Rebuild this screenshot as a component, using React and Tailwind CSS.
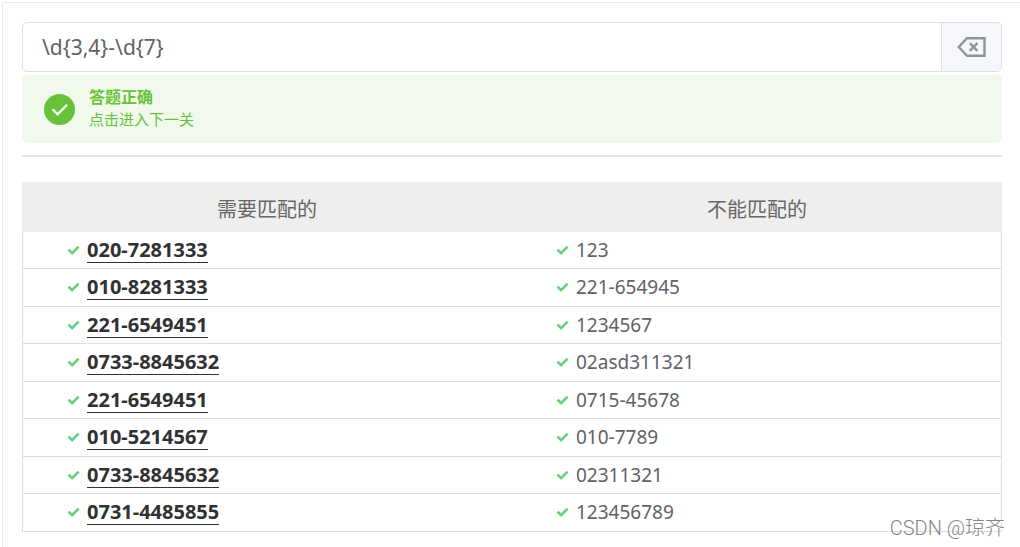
import React, { useState } from "react";

const rows = [
  { match: "020-7281333", skip: "123" },
  { match: "010-8281333", skip: "221-654945" },
  { match: "221-6549451", skip: "1234567" },
  { match: "0733-8845632", skip: "02asd311321" },
  { match: "221-6549451", skip: "0715-45678" },
  { match: "010-5214567", skip: "010-7789" },
  { match: "0733-8845632", skip: "02311321" },
  { match: "0731-4485855", skip: "123456789" },
];

const Tick = () => (
  <svg className="w-[13px] h-3 shrink-0" viewBox="0 0 13 12" fill="none" aria-hidden="true">
    <path d="M1.5 5.6 5.1 9.1 11.6 2.6" stroke="#67d17c" strokeWidth="2.7" />
  </svg>
);

const App = () => {
  const [pattern, setPattern] = useState("\\d{3,4}-\\d{7}");

  return (
    <div className="pt-[2px] pl-[2px] bg-white font-['Noto_Sans','Noto_Sans_CJK_SC',sans-serif] text-[#606266]">
      <main className="relative min-h-[calc(100vh-2px)] border-t border-l border-[#ebebeb] pt-[19px] pl-[19px] pr-[18px] pb-[15px]">
        {/* Pattern input with clear button */}
        <div className="flex h-[50px] rounded-[5px] border border-[#dcdfe6] overflow-hidden">
          <input
            aria-label="正则表达式"
            className="flex-1 min-w-0 px-[19px] pt-[2px] text-[21px] outline-none"
            type="text"
            value={pattern}
            onChange={(e) => setPattern(e.target.value)}
          />
          <button
            type="button"
            aria-label="清空"
            onClick={() => setPattern("")}
            className="w-[60px] flex items-center justify-center border-l border-[#dcdfe6] bg-[#f5f7fa] cursor-pointer"
          >
            <svg className="w-[30px] h-5" viewBox="0 0 30 20" fill="none" stroke="#909399" aria-hidden="true">
              <path d="M10 1.2H27.5V18.8H10L1.8 10Z" strokeWidth="2.4" />
              <path d="M12.8 6.2 20.4 13.8M20.4 6.2 12.8 13.8" strokeWidth="2.4" />
            </svg>
          </button>
        </div>

        {/* Result message */}
        <button
          type="button"
          className="mt-[3px] w-full h-[68px] px-[22px] flex items-center gap-[14px] rounded-[5px] bg-[#f0f9eb] text-[#67c23a] text-left cursor-pointer"
        >
          <svg className="w-[31px] h-[31px]" viewBox="0 0 31 31" fill="none" aria-hidden="true">
            <circle cx="15.5" cy="15.5" r="15.5" fill="#67c23a" />
            <path d="M9.2 15.9 13.6 20.4 22.4 11.4" stroke="#f0f9eb" strokeWidth="2.4" strokeLinecap="round" />
          </svg>
          <span className="flex flex-col pb-[2px]">
            <span className="text-[16px] leading-[22px] font-bold">答题正确</span>
            <span className="text-[15px] leading-[22px]">点击进入下一关</span>
          </span>
        </button>

        <hr className="mt-3 border-t-2 border-[#e4e6eb]" />

        <table className="mt-[25px] w-full table-fixed border-separate border-spacing-0">
          <thead>
            <tr className="h-[50px] bg-[#eeeeee] text-[20px] text-[#666666]">
              <th className="font-normal pt-[6px]">需要匹配的</th>
              <th className="font-normal pt-[6px]">不能匹配的</th>
            </tr>
          </thead>
          <tbody>
            {rows.map((row, i) => (
              <tr key={i} className="odd:h-[37px] even:h-[38px] even:[&>td]:pb-px">
                <td className="pl-11 border-b border-l border-[#dddddd]">
                  <div className="flex items-center gap-[7px]">
                    <Tick />
                    <span className="h-[26px] leading-[26px] border-b border-[#303133] text-[20px] font-bold text-[#303133]">
                      {row.match}
                    </span>
                  </div>
                </td>
                <td className="pl-11 border-b border-r border-[#dddddd]">
                  <div className="flex items-center gap-[7px]">
                    <Tick />
                    <span className="leading-[26px] text-[19px]">{row.skip}</span>
                  </div>
                </td>
              </tr>
            ))}
          </tbody>
        </table>

        <span className="absolute right-[15px] bottom-[5px] text-[20px] leading-[28px] font-light font-['Roboto','Noto_Sans_CJK_SC',sans-serif] text-[#858585] [text-shadow:1px_1px_0_#ffffff]">
          CSDN @琼齐
        </span>
      </main>
    </div>
  );
};

export default App;
